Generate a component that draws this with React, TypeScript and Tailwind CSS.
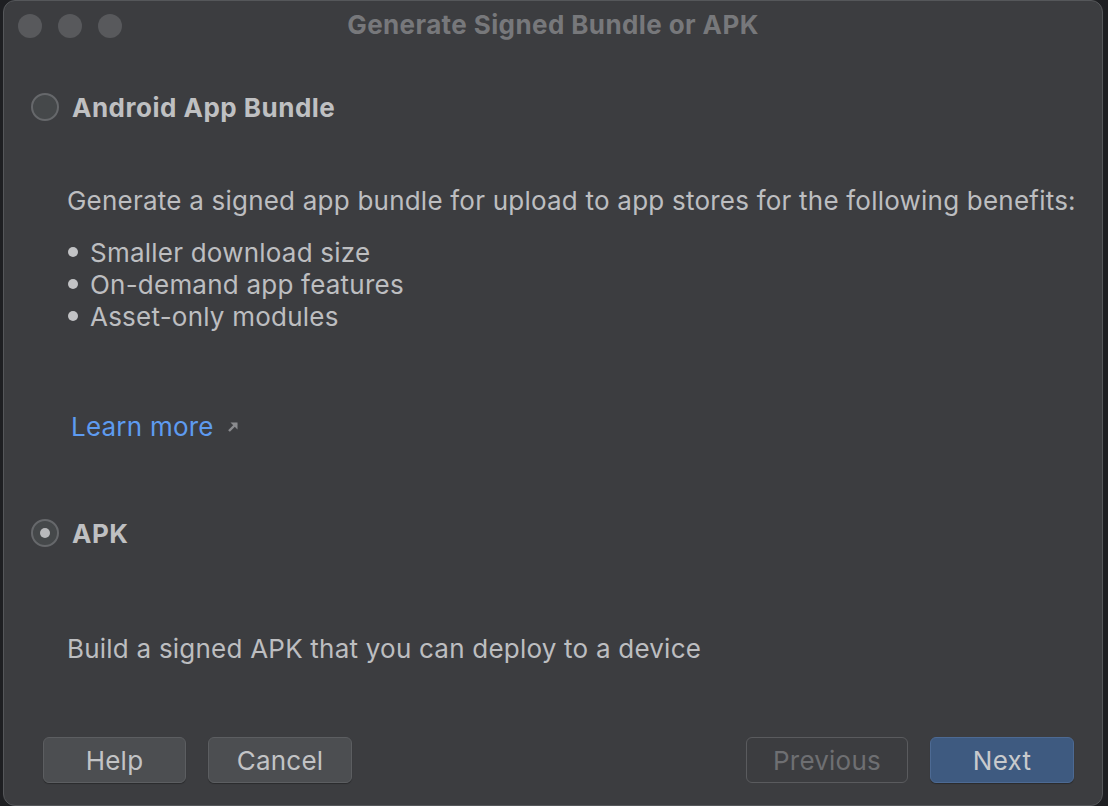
import React from "react";

const font = { fontFamily: "Inter, 'Liberation Sans', sans-serif" };

function Radio({ checked }: { checked?: boolean }) {
  return (
    <div className="w-[28px] h-[28px] rounded-full border-2 border-[#66686b] bg-[#45484a] flex items-center justify-center shrink-0">
      {checked && <div className="w-[10px] h-[10px] rounded-full bg-[#b9babc]" />}
    </div>
  );
}

function Bullet({ children }: { children: React.ReactNode }) {
  return (
    <div className="flex items-center h-[32px]">
      <div className="w-[10px] h-[10px] rounded-full bg-[#c2c3c5] ml-[64px] mr-[12px]" />
      <span>{children}</span>
    </div>
  );
}

export default function App() {
  return (
    <div className="w-[1108px] h-[806px] bg-[#1e1f22] pl-[3px] pr-[5px] overflow-hidden" style={font}>
      <div className="relative h-[806px] bg-[#3c3d40] rounded-[12px] border border-[#55575a] text-[#bdbec0] text-[26px] tracking-[0.22px] flex flex-col">
        <div className="h-[50px] flex items-center relative shrink-0">
          <div className="flex gap-[16px] ml-[14px]">
            <div className="w-[24px] h-[24px] rounded-full bg-[#58595c]" />
            <div className="w-[24px] h-[24px] rounded-full bg-[#58595c]" />
            <div className="w-[24px] h-[24px] rounded-full bg-[#58595c]" />
          </div>
          <div className="absolute inset-0 pb-[4px] flex items-center justify-center font-bold text-[#77787b] text-[26px] tracking-[0.4px]">
            Generate Signed Bundle or APK
          </div>
        </div>

        <div className="flex items-center h-[40px] mt-[36px] ml-[27px] gap-[13px]">
          <Radio />
          <span className="font-bold text-[#bfc0c2] tracking-[0.5px]">Android App Bundle</span>
        </div>

        <div className="mt-[55px] ml-[63px] h-[36px] flex items-center whitespace-nowrap">
          Generate a signed app bundle for upload to app stores for the following benefits:
        </div>

        <div className="mt-[18px] flex flex-col">
          <Bullet>Smaller download size</Bullet>
          <Bullet>On-demand app features</Bullet>
          <Bullet>Asset-only modules</Bullet>
        </div>

        <div className="mt-[76px] ml-[67px] h-[36px] flex items-center gap-[12px]">
          <span className="text-[#5e9bf0]">Learn more</span>
          <svg width="14" height="14" viewBox="0 0 14 14" className="mt-[2px]">
            <path d="M3 11 L10.5 3.5" stroke="#8a8b8e" strokeWidth="2.4" fill="none" />
            <path d="M4.5 2.5 H11.5 V9.5 Z" fill="#8a8b8e" />
          </svg>
        </div>

        <div className="flex items-center h-[40px] mt-[69px] ml-[27px] gap-[13px]">
          <Radio checked />
          <span className="font-bold text-[#bfc0c2] tracking-[0.5px]">APK</span>
        </div>

        <div className="mt-[77px] ml-[63px] h-[36px] flex items-center">
          Build a signed APK that you can deploy to a device
        </div>

        <div className="mt-[71px] flex items-center pl-[39px] pr-[28px]">
          <button className="w-[143px] h-[46px] rounded-[6px] bg-[#4c4e51] border border-[#5c5e61] text-[#c2c3c5] shadow-[0_1px_1px_rgba(0,0,0,0.3)]">Help</button>
          <button className="ml-[22px] w-[144px] h-[46px] rounded-[6px] bg-[#4c4e51] border border-[#5c5e61] text-[#c2c3c5] shadow-[0_1px_1px_rgba(0,0,0,0.3)]">Cancel</button>
          <div className="flex-1" />
          <button className="w-[162px] h-[46px] rounded-[6px] border border-[#5a5b5e] text-[#6e6f72]">Previous</button>
          <button className="ml-[22px] w-[144px] h-[46px] rounded-[6px] bg-[#3e5a80] border border-[#4d6a93] text-[#c8cacd] shadow-[0_1px_1px_rgba(0,0,0,0.3)]">Next</button>
        </div>
      </div>
    </div>
  );
}
